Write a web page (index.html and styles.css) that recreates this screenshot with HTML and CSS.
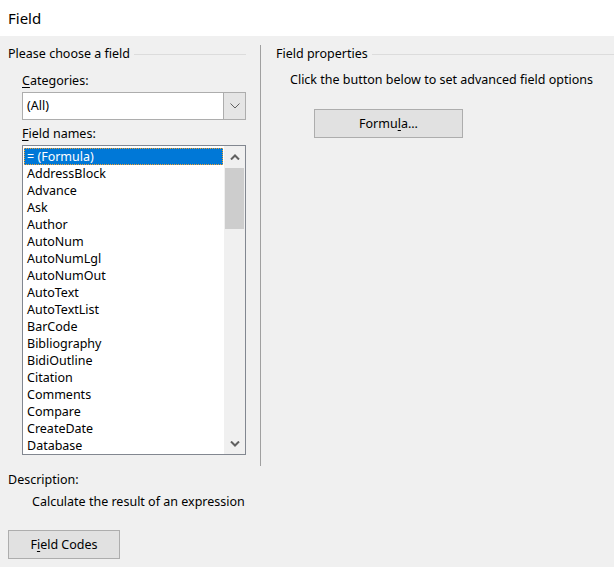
FILE: index.html
```html
<!doctype html>
<html>
  <head>
    <meta charset=utf-8>
    <title>Field</title>
    <link rel="stylesheet" href="styles.css">
  </head>
  <body>
    <div class=titlebar>Field</div>

    <div class=content>
      <div class=left>
        <div class=group-head><span>Please choose a field</span><i></i></div>

        <div class=indent>
          <div class=label><u>C</u>ategories:</div>
          <div class=combo>
            <div class=combo-value>(All)</div>
            <div class=combo-arrow>
              <svg width=10 height=6 viewBox="0 0 10 6"><path d="M0.5 0.5 L5 5 L9.5 0.5" fill=none stroke="#606060" stroke-width=1></path></svg>
            </div>
          </div>

          <div class="label names"><u>F</u>ield names:</div>
          <div class=listbox>
            <div class=items>
              <div class="item selected">= (Formula)</div>
              <div class=item>AddressBlock</div>
              <div class=item>Advance</div>
              <div class=item>Ask</div>
              <div class=item>Author</div>
              <div class=item>AutoNum</div>
              <div class=item>AutoNumLgl</div>
              <div class=item>AutoNumOut</div>
              <div class=item>AutoText</div>
              <div class=item>AutoTextList</div>
              <div class=item>BarCode</div>
              <div class=item>Bibliography</div>
              <div class=item>BidiOutline</div>
              <div class=item>Citation</div>
              <div class=item>Comments</div>
              <div class=item>Compare</div>
              <div class=item>CreateDate</div>
              <div class=item>Database</div>
            </div>
            <div class=scrollbar>
              <div class=sb-btn>
                <svg width=10 height=6 viewBox="0 0 10 6"><path d="M1 5.5 L5 1.5 L9 5.5" fill=none stroke="#606060" stroke-width=2></path></svg>
              </div>
              <div class=sb-track><div class=sb-thumb></div></div>
              <div class=sb-btn>
                <svg width=10 height=6 viewBox="0 0 10 6"><path d="M1 0.5 L5 4.5 L9 0.5" fill=none stroke="#606060" stroke-width=2></path></svg>
              </div>
            </div>
          </div>
        </div>
      </div>

      <div class=divider></div>

      <div class=right>
        <div class=group-head><span>Field properties</span><i></i></div>
        <div class=hint>Click the button below to set advanced field options</div>
        <button class="btn formula">Formu<u>l</u>a...</button>
      </div>
    </div>

    <div class=description>
      <div class=label>Description:</div>
      <div class=desc-text>Calculate the result of an expression</div>
    </div>

    <div class=footer>
      <button class="btn codes">F<u>i</u>eld Codes</button>
    </div>
  </body>
</html>
```

FILE: styles.css
```css
body {
  margin: 0;
  background: #f0f0f0;
  font-family: 'Noto Sans', sans-serif;
  font-size: 12.5px;
  color: #000;
  width: 614px;
  height: 567px;
  overflow: hidden;
}

u { text-decoration: underline; text-underline-offset: 2px }

.titlebar {
  height: 36px;
  line-height: 36px;
  padding-left: 8px;
  background: #fff;
  font-size: 15px;
}

.content {
  display: flex;
  padding: 10px 0 0 8px;
}

.left { width: 238px }

.group-head {
  display: flex;
  align-items: center;
  height: 16px;
  line-height: 16px;
}
.group-head i {
  flex: 1;
  height: 1px;
  background: #dcdcdc;
  margin-left: 4px;
}

.indent { padding-left: 14px; padding-top: 11px }

.label { height: 16px; line-height: 16px }
.label.names { margin-top: 6px }

.combo {
  display: flex;
  height: 28px;
  box-sizing: border-box;
  margin-top: 3px;
  border: 1px solid #adadad;
  background: #fff;
}
.combo-value {
  flex: 1;
  line-height: 26px;
  padding-left: 4px;
}
.combo-arrow {
  width: 21px;
  background: #e5e5e5;
  border-left: 1px solid #adadad;
  display: flex;
  align-items: center;
  justify-content: center;
}

.listbox {
  display: flex;
  height: 310px;
  box-sizing: border-box;
  margin-top: 3px;
  border: 1px solid #828790;
  background: #fff;
  overflow: hidden;
}
.items {
  flex: 1;
  padding: 2px 1px 0 1px;
}
.item {
  height: 17px;
  line-height: 17px;
  padding-left: 3px;
  white-space: nowrap;
}
.item.selected {
  background: #0078d7;
  color: #fff;
  outline: 1px dotted #f0a030;
  outline-offset: -1px;
}

.scrollbar {
  width: 21px;
  background: #f0f0f0;
  display: flex;
  flex-direction: column;
}
.sb-btn {
  height: 20px;
  display: flex;
  align-items: center;
  justify-content: center;
}
.sb-btn:first-child { margin-top: 1px }
.sb-track { flex: 1 }
.sb-thumb {
  height: 61px;
  margin: 1px 1px 0 1px;
  background: #cdcdcd;
}

.divider {
  width: 1px;
  height: 421px;
  margin: -1px 15px 0 14px;
  background: #a0a0a0;
}

.right { flex: 1 }
.hint {
  margin: 10px 0 0 14px;
  line-height: 16px;
}

.btn {
  display: block;
  box-sizing: border-box;
  height: 29px;
  border: 1px solid #adadad;
  background: #e1e1e1;
  font: inherit;
  color: #000;
  padding: 0;
}
.btn.formula {
  width: 149px;
  margin: 21px 0 0 38px;
}

.description {
  padding: 6px 0 0 8px;
}
.desc-text {
  margin-top: 6px;
  padding-left: 24px;
  line-height: 16px;
}

.footer { padding: 20px 0 0 8px }
.btn.codes { width: 112px }
```
